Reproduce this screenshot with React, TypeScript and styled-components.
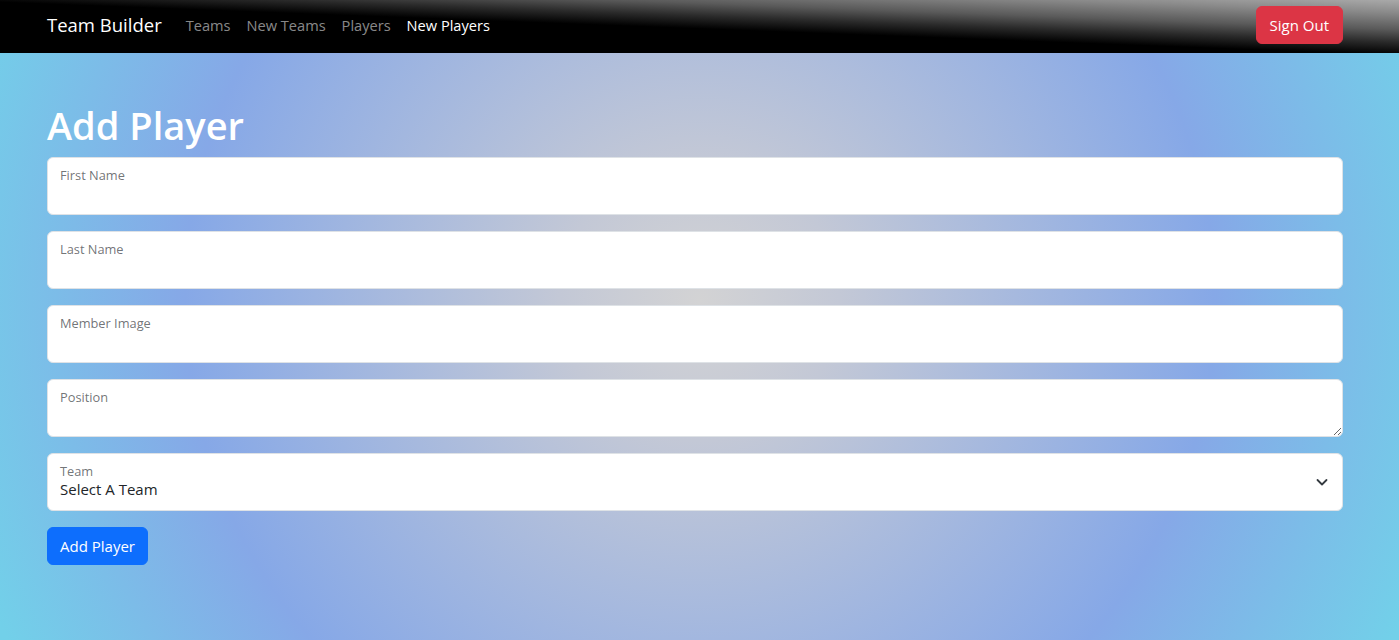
import React from "react";
import styled, { createGlobalStyle } from "styled-components";

const GlobalStyle = createGlobalStyle`
  html, body {
    margin: 0;
    padding: 0;
    min-height: 100%;
  }
  body {
    min-height: 100vh;
    font-family: "Open Sans", "Noto Sans", sans-serif;
    color: #212529;
    background: radial-gradient(circle at 50% 47%, #d3d3d4 0px, #c3c8d6 140px, #86a8e7 515px, #72d0e9 770px);
    background-attachment: fixed;
  }
  * { box-sizing: border-box; }
`;

const Page = styled.div`
  min-height: 100vh;
  display: flex;
  flex-direction: column;
`;

const NavBar = styled.nav`
  height: 53px;
  padding: 0 0 3px;
  background: linear-gradient(to bottom left, #a9a9a9 0%, #8a8a8a 12%, #5a5a5a 28%, #2a2a2a 40%, #000 52%);
  display: flex;
  align-items: center;
`;

const Container = styled.div`
  width: 1296px;
  margin-left: 47px;
  display: flex;
  align-items: center;
`;

const Brand = styled.a`
  font-size: 18.5px;
  line-height: 30px;
  color: #fff;
  margin-right: 16px;
  text-decoration: none;
  white-space: nowrap;
`;

const NavLinks = styled.div`
  display: flex;
  align-items: center;
  flex: 1;
`;

const NavLink = styled.a<{ $active?: boolean }>`
  font-size: 14.6px;
  line-height: 24px;
  padding: 8px;
  color: ${(p) => (p.$active ? "#fff" : "rgba(255,255,255,0.55)")};
  text-decoration: none;
  white-space: nowrap;
`;

const Button = styled.button<{ $variant: "danger" | "primary" }>`
  font-family: inherit;
  font-size: 15px;
  line-height: 24px;
  padding: 6px 12px;
  height: 38px;
  border-radius: 6px;
  border: 1px solid ${(p) => (p.$variant === "danger" ? "#dc3545" : "#0d6efd")};
  background: ${(p) => (p.$variant === "danger" ? "#dc3545" : "#0d6efd")};
  color: #fff;
  cursor: pointer;
  white-space: nowrap;
`;

const SignOut = styled(Button)`
  padding: 6px 13px;
`;

const Main = styled.main`
  width: 1296px;
  margin-left: 47px;
  padding-top: 48px;
  display: flex;
  flex-direction: column;
`;

const Title = styled.h1`
  margin: 0 0 8px;
  font-size: 38px;
  line-height: 48px;
  font-weight: 600;
  color: #fff;
`;

const Form = styled.form`
  display: flex;
  flex-direction: column;
  gap: 16px;
  align-items: flex-start;
`;

const Floating = styled.div`
  position: relative;
  width: 100%;
  height: 58px;
`;

const controlCss = `
  width: 100%;
  height: 58px;
  display: block;
  margin: 0;
  padding: 26px 12px 10px;
  font-family: inherit;
  font-size: 15px;
  line-height: 24px;
  color: #212529;
  background: #fff;
  border: 1px solid #dee2e6;
  border-radius: 6px;
  outline: none;
`;

const Input = styled.input`
  ${controlCss}
`;

const TextArea = styled.textarea`
  ${controlCss}
  min-height: 58px;
  resize: vertical;
  overflow: hidden;
`;

const Select = styled.select`
  ${controlCss}
  appearance: none;
  -webkit-appearance: none;
  padding: 23px 36px 9px 12px;
  cursor: pointer;
`;

const FloatLabel = styled.label`
  position: absolute;
  top: 9px;
  left: 13px;
  font-size: 12.8px;
  line-height: 18px;
  color: rgba(33, 37, 41, 0.65);
  pointer-events: none;
  white-space: nowrap;
`;

const Chevron = styled.svg`
  position: absolute;
  right: 13px;
  top: 21px;
  width: 16px;
  height: 16px;
  pointer-events: none;
`;

export default function App() {
  return (
    <Page>
      <GlobalStyle />
      <NavBar>
        <Container>
          <Brand href="#">Team Builder</Brand>
          <NavLinks>
            <NavLink href="#">Teams</NavLink>
            <NavLink href="#">New Teams</NavLink>
            <NavLink href="#">Players</NavLink>
            <NavLink href="#" $active>
              New Players
            </NavLink>
          </NavLinks>
          <SignOut $variant="danger" type="button">
            Sign Out
          </SignOut>
        </Container>
      </NavBar>
      <Main>
        <Title>Add Player</Title>
        <Form onSubmit={(e) => e.preventDefault()}>
          <Floating>
            <Input id="firstName" type="text" />
            <FloatLabel htmlFor="firstName">First Name</FloatLabel>
          </Floating>
          <Floating>
            <Input id="lastName" type="text" />
            <FloatLabel htmlFor="lastName">Last Name</FloatLabel>
          </Floating>
          <Floating>
            <Input id="image" type="url" />
            <FloatLabel htmlFor="image">Member Image</FloatLabel>
          </Floating>
          <Floating>
            <TextArea id="position" />
            <FloatLabel htmlFor="position">Position</FloatLabel>
          </Floating>
          <Floating>
            <Select id="team" defaultValue="">
              <option value="">Select A Team</option>
            </Select>
            <FloatLabel htmlFor="team">Team</FloatLabel>
            <Chevron viewBox="0 0 16 16">
              <path
                d="m3.5 6 4.5 4.5 4.5-4.5"
                fill="none"
                stroke="#343a40"
                strokeWidth="1.8"
                strokeLinecap="round"
                strokeLinejoin="round"
              />
            </Chevron>
          </Floating>
          <Button $variant="primary" type="submit">
            Add Player
          </Button>
        </Form>
      </Main>
    </Page>
  );
}
